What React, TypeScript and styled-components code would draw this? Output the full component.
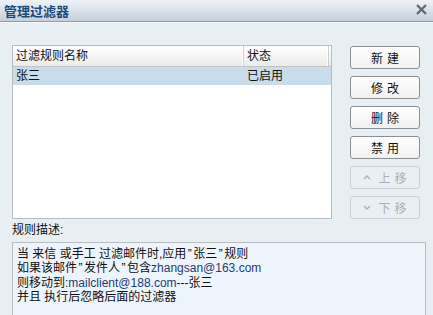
import React from "react";
import styled, { createGlobalStyle } from "styled-components";

const Global = createGlobalStyle`
  html, body { margin: 0; padding: 0; }
  body {
    width: 433px; height: 315px; overflow: hidden;
    background: #e8eff3;
    font-family: "Liberation Sans", "Noto Sans CJK SC", sans-serif;
    font-size: 12px; color: #111;
  }
`;

const Window = styled.div`
  width: 433px; height: 315px; display: flex; flex-direction: column;
  background: #e8eff3; overflow: hidden;
`;

const TitleBar = styled.div`
  height: 22px; box-sizing: border-box; flex: none;
  display: flex; align-items: center; justify-content: space-between;
  padding: 0 6px 0 4px;
  background: linear-gradient(#eef2f6, #c4d0dc);
  border-bottom: 1px solid #8d9cad;
  box-shadow: 0 1px 0 #f6f9fb;
`;

const Title = styled.div`
  font-size: 13px; font-weight: bold; color: #1d4a7c;
`;

const Close = styled.svg`
  width: 11px; height: 11px; margin-top: -2px;
`;

const Body = styled.div`
  display: flex; flex-direction: column; padding: 23px 7px 0 12px;
`;

const Top = styled.div`
  display: flex; gap: 18px;
`;

const List = styled.div`
  width: 320px; height: 174px; box-sizing: border-box;
  border: 1px solid #b9bcbf; background: #fff;
`;

const HeaderRow = styled.div`
  display: grid; grid-template-columns: 231px 85px 2px; height: 20px;
  background: linear-gradient(#ffffff, #ebebeb);
  border-bottom: 1px solid #c2c2c2;
`;

const HeaderCell = styled.div`
  padding-left: 3px; line-height: 20px; border-right: 1px solid #d0d0d0;
  box-shadow: inset -1px 0 0 #fff;
`;

const Row = styled.div<{ $selected?: boolean }>`
  display: grid; grid-template-columns: 231px 85px; height: 18px; line-height: 18px;
  background: ${(p) => (p.$selected ? "#c8dcec" : "transparent")};
`;

const Cell = styled.div`
  padding-left: 3px;
`;

const Buttons = styled.div`
  display: flex; flex-direction: column; gap: 7px; padding-top: 1px;
`;

const Btn = styled.div<{ $disabled?: boolean }>`
  width: 70px; height: 23px; box-sizing: border-box;
  border: 1px solid ${(p) => (p.$disabled ? "#c9d1d7" : "#8b9096")};
  border-radius: 3px;
  background: ${(p) => (p.$disabled ? "#e9eff3" : "linear-gradient(#ffffff, #f1f1f1)")};
  color: ${(p) => (p.$disabled ? "#a9b0b7" : "#111")};
  display: flex; align-items: center; justify-content: center; gap: 4px;
  font-size: 12px; letter-spacing: 4px; padding-left: 4px;
`;

const Arrow = styled.svg`
  width: 8px; height: 5px; margin-right: 3px;
`;

const Label = styled.div`
  margin-top: 3px; height: 20px; line-height: 17px;
`;

const Desc = styled.div`
  width: 414px; height: 80px; box-sizing: border-box;
  border: 1px solid #b9bdc1; border-bottom: none;
  background: #eef4fb; padding: 4px 0 0 4px; line-height: 14.3px;
`;

const Link = styled.span`
  color: #1e3c7a; font-size: 12px;
`;

const Quote = styled.span`
  margin: 0 1.5px;
`;

export default function App() {
  return (
    <Window>
      <Global />
      <TitleBar>
        <Title>管理过滤器</Title>
        <Close viewBox="0 0 11 11">
          <path d="M1 1 L10 10 M10 1 L1 10" stroke="#646b73" strokeWidth="2.4" />
        </Close>
      </TitleBar>
      <Body>
        <Top>
          <List>
            <HeaderRow>
              <HeaderCell>过滤规则名称</HeaderCell>
              <HeaderCell>状态</HeaderCell>
              <div />
            </HeaderRow>
            <Row $selected>
              <Cell>张三</Cell>
              <Cell>已启用</Cell>
            </Row>
          </List>
          <Buttons>
            <Btn>新建</Btn>
            <Btn>修改</Btn>
            <Btn>删除</Btn>
            <Btn>禁用</Btn>
            <Btn $disabled>
              <Arrow viewBox="0 0 8 5"><path d="M1 4 L4 1 L7 4" fill="none" stroke="#a9b0b7" strokeWidth="1.3" /></Arrow>
              上移
            </Btn>
            <Btn $disabled>
              <Arrow viewBox="0 0 8 5"><path d="M1 1 L4 4 L7 1" fill="none" stroke="#a9b0b7" strokeWidth="1.3" /></Arrow>
              下移
            </Btn>
          </Buttons>
        </Top>
        <Label>规则描述:</Label>
        <Desc>
          当 来信 或手工 过滤邮件时,应用<Quote>”</Quote>张三<Quote>”</Quote>规则<br />
          如果该邮件<Quote>”</Quote>发件人<Quote>”</Quote>包含<Link>zhangsan@163.com</Link><br />
          则移动到:<Link>mailclient@188.com</Link>---张三<br />
          并且 执行后忽略后面的过滤器
        </Desc>
      </Body>
    </Window>
  );
}
